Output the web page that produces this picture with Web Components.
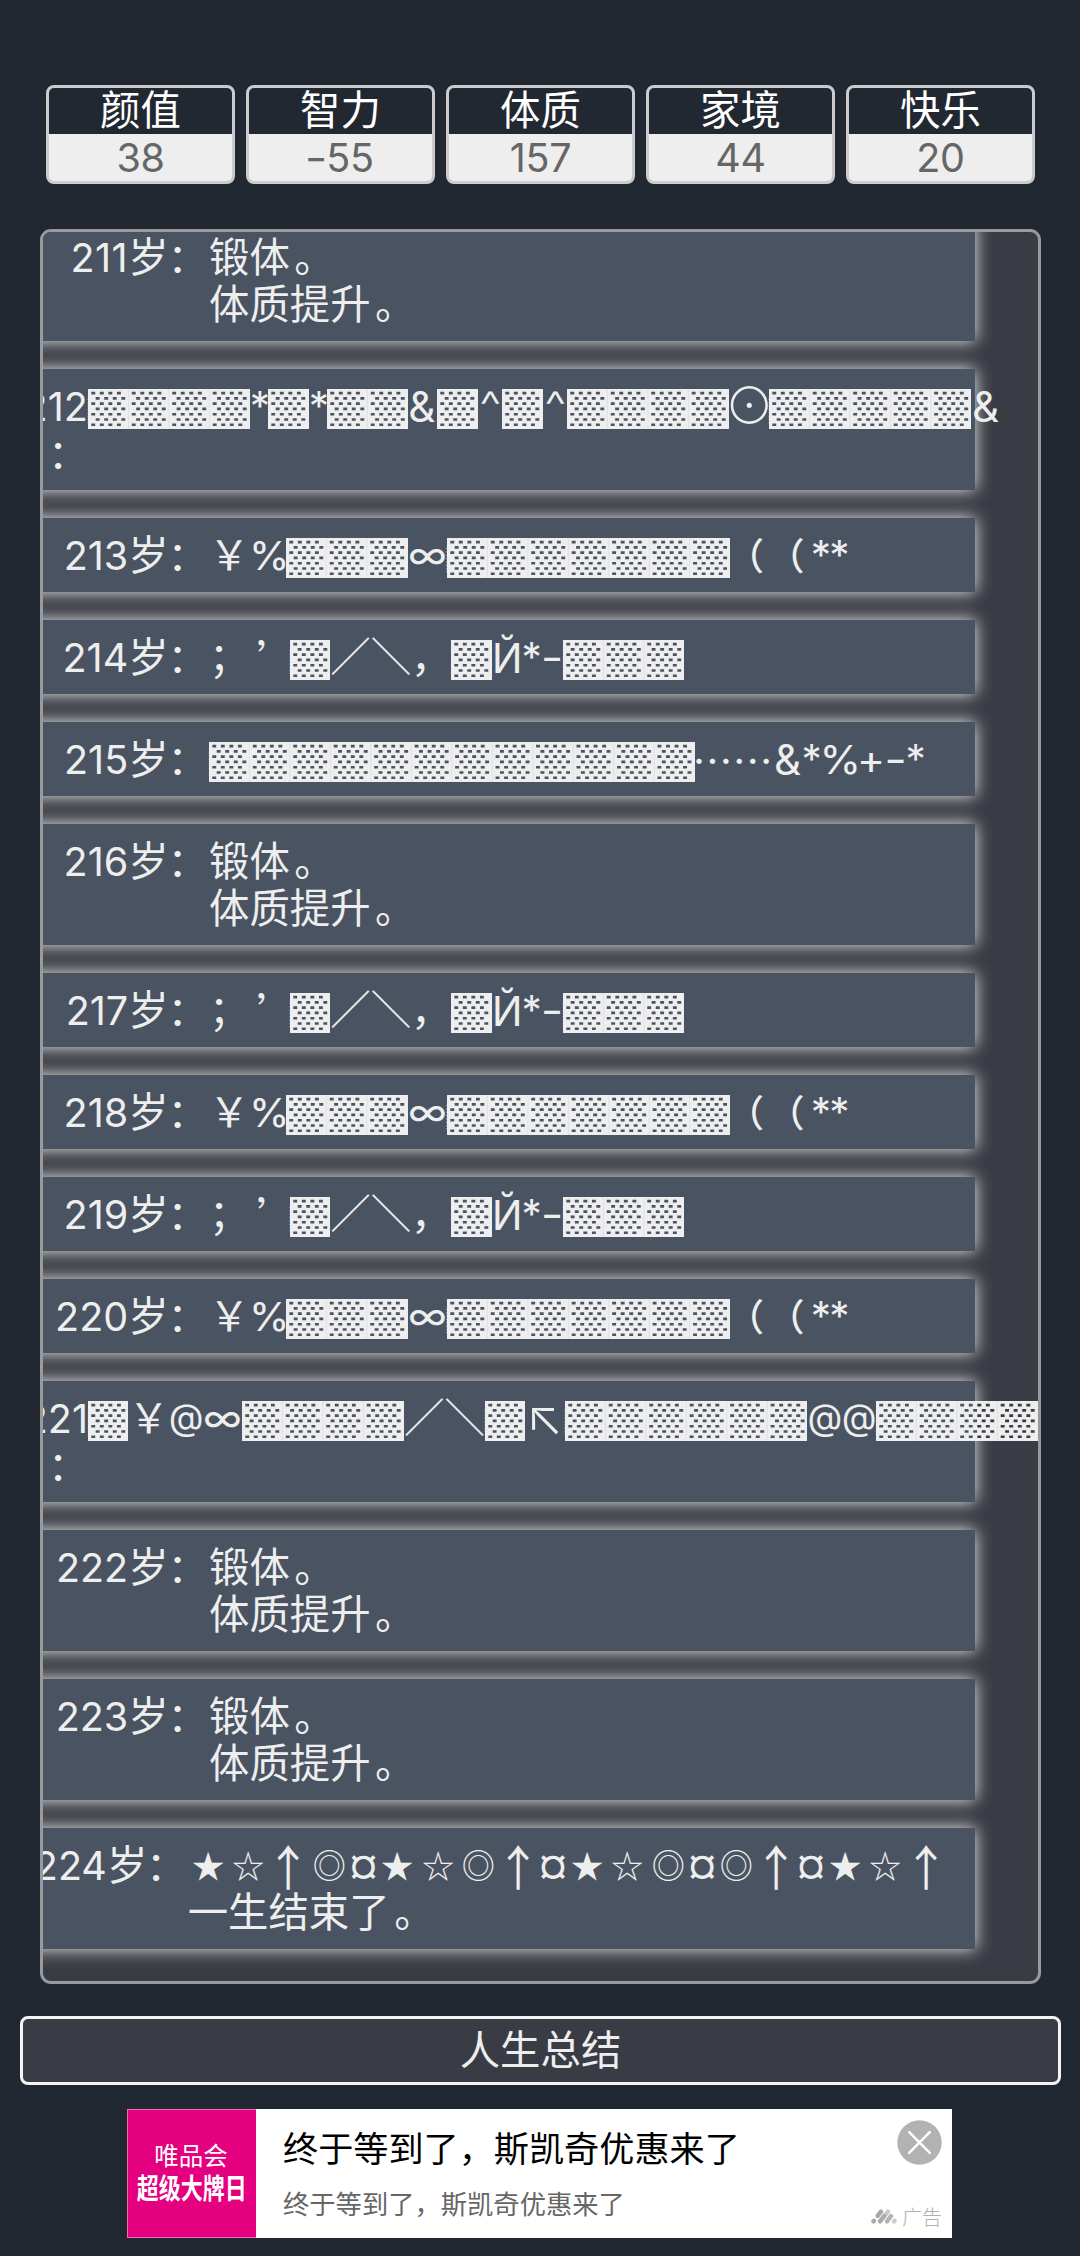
<!DOCTYPE html>
<html lang="zh">
<head>
<meta charset="utf-8">
<title>人生重开模拟器</title>
<style>
html,body{margin:0;padding:0;background:#222831}
body{font-family:Inter,"Noto Sans CJK SC",sans-serif;font-size:40.4px;line-height:47px;color:#eee}
</style>
</head>
<body>
<life-page></life-page>
<script>
class Base extends HTMLElement{
  constructor(){super();this.attachShadow({mode:'open'})}
  connectedCallback(){this.shadowRoot.innerHTML=this.render()}
}
customElements.define('stat-box',class extends Base{
  render(){return `<style>
  :host{display:block;width:183px;height:93px;border:3px solid #ccc;border-radius:8px;overflow:hidden;text-align:center;background:#eee}
  .h{height:46px;line-height:46px;background:#222831;color:#fff}
  .v{height:47px;line-height:48px;color:#666;font-size:39.5px;letter-spacing:-.3px}
  </style><div class="h">${this.getAttribute('name')}</div><div class="v"><slot></slot></div>`}
});
customElements.define('text-run',class extends Base{
  render(){
    const a=(n,d)=>this.getAttribute(n)||d;
    return `<style>
    :host{display:block;flex:none;width:${a('w',40.4)}px;height:47px;line-height:47px;white-space:pre;text-align:${a('al','center')}}
    span{display:inline-block;width:100%;height:47px;font-family:${a('f','')?`"${a('f')}",`:''}Inter,"Noto Sans CJK SC",sans-serif;font-weight:${a('b',400)};font-size:${a('s',40.4)}px;transform:translate(${a('dx',0)}px,${a('dy',0)}px) scale(${a('sx',1)},${a('sy',1)})}
    </style><span><slot></slot></span>`}
});
customElements.define('shade-run',class extends Base{
  render(){
    const n=+this.getAttribute('n'),t=40.47,W=n*t;
    let d='',o='',s='';
    for(let i=0;i<n;i++){
      for(let r=0;r<7;r++)for(let c=0;c<4;c++){
        const x=i*t+(r%2?7.7:3.3)+c*8.55,y=2.8+r*5.27;
        const p=`M${x.toFixed(2)} ${y.toFixed(2)}h3.9v2.7h-3.9z`;
        if(this.hasAttribute('out')&&i*t+c*8.55>98)o+=p;else d+=p;
      }
      if(i)s+=`M${(i*t).toFixed(2)} 0v40.3`;
    }
    return `<style>
    :host{display:block;flex:none;position:relative;width:${W}px;height:40.3px;margin-top:6px;background:#eee;color:#eee;line-height:40.3px;white-space:nowrap}
    span{display:block;font-family:"Noto Sans CJK SC",sans-serif;font-size:26px;letter-spacing:14.4px}
    svg{position:absolute;left:0;top:0;display:block}
    </style><span>${'▓'.repeat(n)}</span><svg width="${W}" height="40.3"><path d="${s}" stroke="#dcdee0" stroke-width=".8"/><path d="${d}" fill="#4a5361"/><path d="${o}" fill="#393c44"/></svg>`}
});
customElements.define('life-entry',class extends Base{
  render(){
    const end=+(this.getAttribute('end')||209)-43,ls=this.getAttribute('ls')||'0';
    return `<style>
    :host{display:block;width:932px;margin-left:-30px;padding:13.5px 0 13.5px 30px;background:#4a5361;box-shadow:0 0 16px #eee}
    .r{display:flex;align-items:flex-start}
    .a{width:${end}px;flex:none;display:flex;justify-content:flex-end;white-space:nowrap}
    .a.wrap{flex-direction:column;align-items:flex-end}
    i{display:block;font-style:normal;letter-spacing:${ls}px;font-size:39.5px;transform:translateY(.8px)}
    .c{display:block;width:40.4px;transform:translate(-1.2px,.8px)}
    .w{display:block;width:100%;box-sizing:border-box;padding-left:5px;transform:translateY(.8px)}
    .t{display:flex;flex-direction:column;flex:none}
    </style><div class="r"><div class="a${this.hasAttribute('wrap')?' wrap':''}"><i>${this.getAttribute('age')}</i>${this.hasAttribute('wrap')?'<span class="w">：</span>':'<span>岁</span><span class="c">：</span>'}</div><div class="t"><slot></slot></div></div>`}
});
customElements.define('text-line',class extends Base{
  render(){return `<style>:host{display:flex;height:47px;align-items:flex-start;white-space:pre}</style><slot></slot>`}
});
customElements.define('life-list',class extends Base{
  render(){return `<style>
  :host{display:flex;flex-direction:column;justify-content:flex-end;gap:28px;box-sizing:border-box;width:1001px;height:1755px;margin:45px 0 0 40px;padding-bottom:32px;border:3px solid #999a9c;border-radius:11px;background:#393c44;overflow:hidden}
  </style><slot></slot>`}
});
customElements.define('summary-button',class extends Base{
  render(){return `<style>
  :host{display:flex;align-items:center;justify-content:center;box-sizing:border-box;width:1041px;height:69px;margin:32px 0 0 20px;border:3px solid #f4f4f4;border-radius:8px;background:#393c44}
  </style><slot></slot>`}
});
customElements.define('ad-banner',class extends Base{
  render(){return `<style>
  :host{display:flex;box-sizing:border-box;width:825px;height:129px;margin:24px 0 0 127px;background:#fff;font-family:"Noto Sans CJK SC",sans-serif;color:#000}
  .logo{width:129px;box-sizing:border-box;border:1px solid #f06ab4;border-right:0;background:#e5007f;color:#fff;display:flex;flex-direction:column;align-items:center;padding-top:28px}
  .l1{font-size:24.5px;line-height:34px;height:34px;white-space:nowrap;margin-left:-2px}
  .l2{font-size:27.5px;font-weight:700;line-height:38px;white-space:nowrap;transform:translateY(-4px) scale(.8,1.04)}
  .m{flex:1;padding:12px 0 0 27px;white-space:nowrap}
  .a{font-size:35.15px;line-height:51px}
  .b{font-size:26.3px;line-height:39px;color:#666;margin-top:11px}
  .e{width:80px;display:flex;flex-direction:column;align-items:flex-end;justify-content:space-between;padding:11px 10px 7px 0;box-sizing:border-box}
  .g{display:flex;align-items:center;gap:5px;font-size:20px;line-height:29px;color:#b0b0b0;font-weight:300;white-space:nowrap}
  svg{display:block;flex:none}
  </style>
  <div class="logo"><div class="l1">唯品会</div><div class="l2">超级大牌日</div></div>
  <div class="m"><div class="a">终于等到了，斯凯奇优惠来了</div><div class="b">终于等到了，斯凯奇优惠来了</div></div>
  <div class="e"><svg width="45" height="45" viewBox="0 0 45 45"><circle cx="22.5" cy="22.5" r="22.2" fill="#b2b2b2"/><path d="M12.2 12.2 32.8 32.8M32.8 12.2 12.2 32.8" stroke="#fff" stroke-width="2.5" stroke-linecap="round"/></svg>
  <div class="g"><svg width="26" height="15" viewBox="0 0 26 15" stroke-linecap="round" stroke-width="4.4"><path d="M23.1 12.3 23.5 11.8" stroke="#ccc"/><path d="M13 7.4 17 2.6" stroke="#c8c8c8"/><path d="M2.5 12.3 2.9 11.8M6.6 6.8 10 2.6" stroke="#a8a8a8"/><path d="M9 12.3 13 7.2" stroke="#aaa"/><path d="M16 12.3 20 7.2" stroke="#b4b4b4"/></svg>广告</div></div>`}
});
const T=(s,w,x='')=>`<text-run w="${w||40.4}" ${x}>${s}</text-run>`;
const B=(n,o='')=>`<shade-run n="${n}" ${o}></shade-run>`;
const L=s=>`<text-line>${s}</text-line>`;
const E=(age,body,x='')=>`<life-entry age="${age}" ${x}>${body}</life-entry>`;
const CJK='f="Noto Sans CJK SC"';
const stop=T('。',0,'dx="4.5"');
const body=L('锻体'+stop)+L('体质提升'+stop);
const star=T('*',18.6),amp=T('&amp;',29,'s="42" dx="-1"'),pct=T('%',36.8,'s="39" sx="1.06" al="left" dx="1"'),inf=T('∞',39,'s="39.5" sx="1.05" dy="-1"'),hat=T('^',24.6,'sx="1.22" dy="-1" b="300"'),at=T('@',34.3,'s="36" dy="-3"');
const yen=T('￥'),sl=T('／'),bs=T('＼'),par=T('（',0,'s="37" dx="-4.5" b="500"'),dash=w=>T('-',w,'sx="1.22"');
const rowY=L(yen+pct+B(3)+inf+B(7)+par+par+star+star);
const rowS=L(T('；')+T('’',40.4,CJK+' al="left" dx="7"')+B(1)+sl+bs+T('，')+B(1)+T('Й',29.7,'dy="1"')+T('*',19)+dash(22.3)+B(3));
const S={'★':T('★',0,CJK+' sx=".8" sy=".8" dy="-1"'),'☆':T('☆',0,CJK+' sx=".8" sy=".8" dy="-1"'),'↑':T('↑',0,CJK+' sx="1.12" sy="1.2" dy="-1"'),'◎':T('◎',0,CJK+' sx=".82" sy=".82" dy="-1.5"'),'¤':T('¤',28,'s="38" b="600" dy="-1"')};
const dots=T('…',40.4,CJK+' dx="-2.5"');
customElements.define('life-page',class extends Base{
  render(){return `<style>
  :host{display:block;width:1080px;height:2256px;overflow:hidden}
  .s{display:flex;gap:11px;padding:85px 0 0 46px}
  b{font-weight:400;display:inline-block;transform:scaleX(1.25);margin-right:1px}
  </style>
  <div class="s"><stat-box name="颜值">38</stat-box><stat-box name="智力"><b>-</b>55</stat-box><stat-box name="体质">157</stat-box><stat-box name="家境">44</stat-box><stat-box name="快乐">20</stat-box></div>
  <life-list>
  ${E(211,body,'ls=".5"')}
  ${E(212,L(B(4)+star+B(1)+star+B(2)+amp+B(1)+hat+B(1)+hat+B(4)+T('⊙',39.4,'b="200" sx="1.24" sy="1.24"')+B(5)+T('&amp;',29,'s="42" dx="0"')),'wrap end="87.8"')}
  ${E(213,rowY)}${E(214,rowS)}
  ${E(215,L(B(12)+dots+dots+T('&amp;',27,'s="42" dx="-1.5"')+T('*',20,'dx="-1"')+T('%',37,'s="40" sx="1.06" al="left" dx="-1.5"')+T('+',25,'sx="1.05" dx="-1.5"')+dash(23)+T('*',19,'dx="-2"')))}
  ${E(216,body)}${E(217,rowS)}${E(218,rowY)}${E(219,rowS)}${E(220,rowY)}
  ${E(221,L(B(1)+yen+at+inf+B(4)+sl+bs+B(1)+T('↖',39.4,'b="300" sx="1.2" sy="1.2" dy="-1"')+B(6)+at+at+B(4,'out')),'wrap end="88"')}
  ${E(222,body)}${E(223,body)}
  ${E(224,L([...'★☆↑◎¤★☆◎↑¤★☆◎¤◎↑¤★☆↑'].map(c=>S[c]).join(''))+L('一生结束了'+stop),'end="187.7"')}
  </life-list>
  <summary-button>人生总结</summary-button>
  <ad-banner></ad-banner>`}
});
</script>
</body>
</html>
